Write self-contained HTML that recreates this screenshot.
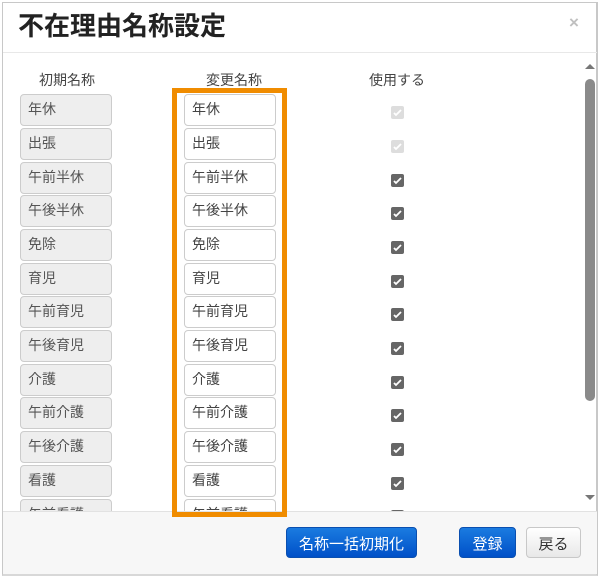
<!DOCTYPE html>
<html><head><meta charset="utf-8"><style>
*{box-sizing:border-box;margin:0;padding:0}
body{width:603px;height:578px;background:#fff;position:relative;overflow:hidden;font-family:"Liberation Sans","Noto Sans CJK JP",sans-serif;color:#333}
.a{position:absolute}
.dlg{left:2px;top:2px;width:596px;height:574px;border:1px solid #c8c8c8;border-right:2px solid #c8c8c8;border-bottom:2px solid #d8d8d8;background:#fff}
.title{left:18px;top:6px;font-size:26px;font-weight:bold;color:#222}
.x{left:569px;top:13px;font-size:17px;color:#c0c0c0;font-weight:bold}
.hl{left:3px;top:52px;width:594px;height:1px;background:#e8e8e8}
.h{top:70px;font-size:14px;color:#444;width:100px;text-align:center}
.box{height:32px;border:1px solid #ccc;border-radius:4px;font-size:14px;padding:4px 0 0 7px;color:#555}
.l{left:20px;width:92px;background:#eee}
.r{left:184px;width:92px;background:#fff;color:#444}
.cb{left:391px;width:13px;height:13px;border-radius:2px;background:#666}
.cb.d{background:#ddd}
.cb svg{position:absolute;left:2px;top:2px}
.foot{left:3px;top:511px;width:594px;height:63px;background:#f7f7f7;border-top:1px solid #e2e2e2}
.btn{top:527px;height:31px;border-radius:4px;font-size:15px;text-align:center;padding-top:5px}
.blue{background:linear-gradient(#1a7be0,#0050c8);color:#fff;border:1px solid #0a4fb0}
.gray{background:linear-gradient(#fff,#e8e8e8);border:1px solid #c8c8c8;color:#333}
.orange{left:172px;top:88px;width:115px;height:429px;border:5px solid #f08c00}
</style></head><body>
<div class="a dlg"></div>
<div class="a title">不在理由名称設定</div>
<div class="a x">×</div>
<div class="a hl"></div>
<div class="a h" style="left:17px">初期名称</div>
<div class="a h" style="left:184px">変更名称</div>
<div class="a h" style="left:347px">使用する</div>
<div class="a" style="left:0;top:0;width:603px;height:511px;overflow:hidden">
<div class="a box l" style="top:94px">年休</div><div class="a box r" style="top:94px">年休</div>
<div class="a box l" style="top:128px">出張</div><div class="a box r" style="top:128px">出張</div>
<div class="a box l" style="top:162px">午前半休</div><div class="a box r" style="top:162px">午前半休</div>
<div class="a box l" style="top:195px">午後半休</div><div class="a box r" style="top:195px">午後半休</div>
<div class="a box l" style="top:229px">免除</div><div class="a box r" style="top:229px">免除</div>
<div class="a box l" style="top:263px">育児</div><div class="a box r" style="top:263px">育児</div>
<div class="a box l" style="top:296px">午前育児</div><div class="a box r" style="top:296px">午前育児</div>
<div class="a box l" style="top:330px">午後育児</div><div class="a box r" style="top:330px">午後育児</div>
<div class="a box l" style="top:364px">介護</div><div class="a box r" style="top:364px">介護</div>
<div class="a box l" style="top:397px">午前介護</div><div class="a box r" style="top:397px">午前介護</div>
<div class="a box l" style="top:431px">午後介護</div><div class="a box r" style="top:431px">午後介護</div>
<div class="a box l" style="top:465px">看護</div><div class="a box r" style="top:465px">看護</div>
<div class="a box l" style="top:499px">午前看護</div><div class="a box r" style="top:499px">午前看護</div>
<div class="a cb d" style="top:106px"><svg width="9" height="9"><path d="M1 5l2 2 5-5" stroke="#fff" stroke-width="1.8" fill="none"/></svg></div>
<div class="a cb d" style="top:140px"><svg width="9" height="9"><path d="M1 5l2 2 5-5" stroke="#fff" stroke-width="1.8" fill="none"/></svg></div>
<div class="a cb" style="top:174px"><svg width="9" height="9"><path d="M1 5l2 2 5-5" stroke="#fff" stroke-width="1.8" fill="none"/></svg></div>
<div class="a cb" style="top:207px"><svg width="9" height="9"><path d="M1 5l2 2 5-5" stroke="#fff" stroke-width="1.8" fill="none"/></svg></div>
<div class="a cb" style="top:241px"><svg width="9" height="9"><path d="M1 5l2 2 5-5" stroke="#fff" stroke-width="1.8" fill="none"/></svg></div>
<div class="a cb" style="top:275px"><svg width="9" height="9"><path d="M1 5l2 2 5-5" stroke="#fff" stroke-width="1.8" fill="none"/></svg></div>
<div class="a cb" style="top:308px"><svg width="9" height="9"><path d="M1 5l2 2 5-5" stroke="#fff" stroke-width="1.8" fill="none"/></svg></div>
<div class="a cb" style="top:342px"><svg width="9" height="9"><path d="M1 5l2 2 5-5" stroke="#fff" stroke-width="1.8" fill="none"/></svg></div>
<div class="a cb" style="top:376px"><svg width="9" height="9"><path d="M1 5l2 2 5-5" stroke="#fff" stroke-width="1.8" fill="none"/></svg></div>
<div class="a cb" style="top:409px"><svg width="9" height="9"><path d="M1 5l2 2 5-5" stroke="#fff" stroke-width="1.8" fill="none"/></svg></div>
<div class="a cb" style="top:443px"><svg width="9" height="9"><path d="M1 5l2 2 5-5" stroke="#fff" stroke-width="1.8" fill="none"/></svg></div>
<div class="a cb" style="top:477px"><svg width="9" height="9"><path d="M1 5l2 2 5-5" stroke="#fff" stroke-width="1.8" fill="none"/></svg></div>
<div class="a cb" style="top:510px"></div>
</div>
<svg class="a" style="left:584px;top:62px" width="12" height="8"><path d="M1 7L6 2L11 7Z" fill="#777"/></svg>
<div class="a" style="left:585px;top:79px;width:10px;height:322px;border-radius:5px;background:#8a8a8a"></div>
<svg class="a" style="left:584px;top:494px" width="12" height="8"><path d="M1 1L6 6L11 1Z" fill="#777"/></svg>
<div class="a foot"></div>
<div class="a orange"></div>
<div class="a btn blue" style="left:286px;width:131px">名称一括初期化</div>
<div class="a btn blue" style="left:459px;width:57px">登録</div>
<div class="a btn gray" style="left:526px;width:55px">戻る</div>
</body></html>
